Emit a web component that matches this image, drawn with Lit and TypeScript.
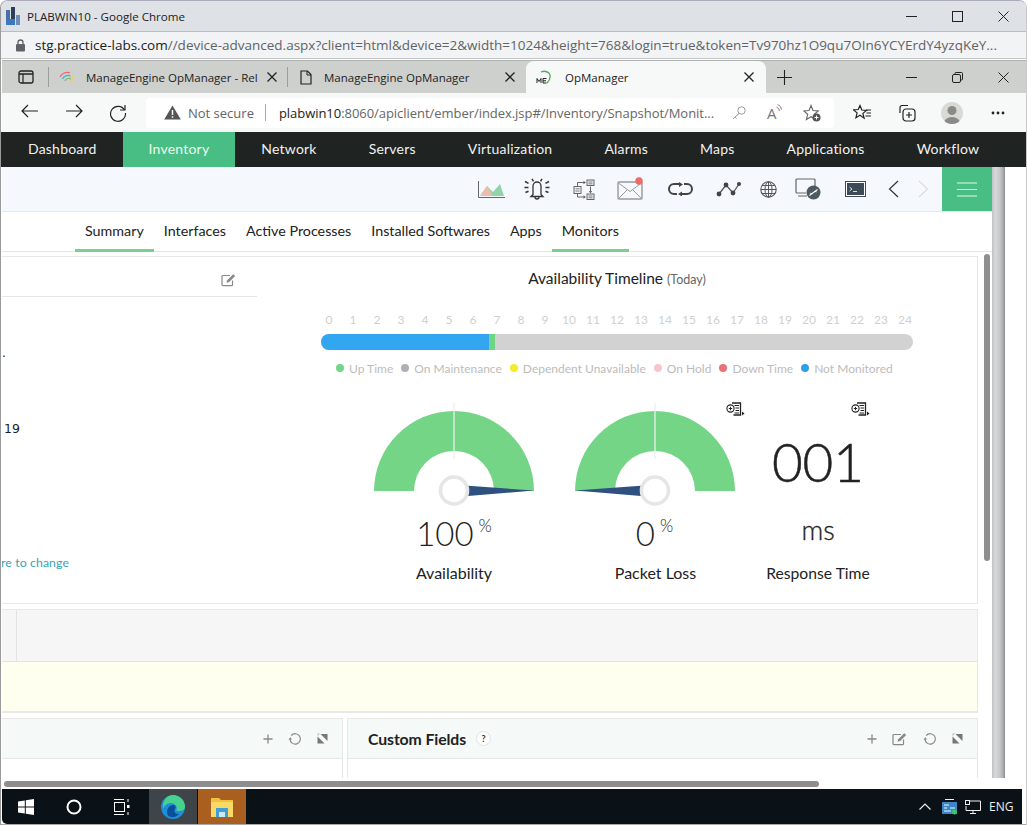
import { LitElement, html, css, svg } from "lit";
import { customElement } from "lit/decorators.js";

const ic = (w: number, h: number, body: unknown, cls = "") =>
  html`<svg class=${cls} width=${w} height=${h} viewBox="0 0 ${w} ${h}" fill="none">${body}</svg>`;

const closeX = (c = "#222") => ic(12, 12, svg`<path d="M1.5 1.5l9 9M10.5 1.5l-9 9" stroke=${c} stroke-width="1.3"/>`);
const plus = ic(10, 10, svg`<path d="M5 .5v9M.5 5h9" stroke="#888" stroke-width="1.3"/>`);
const refresh = ic(14, 14, svg`<path d="M3.2 3.6A5.2 5.2 0 1 1 2 7" stroke="#888" stroke-width="1.2"/><path d="M.4 7.4l2-2.2 1.6 2.4z" fill="#888"/>`);
const expand = ic(11, 11, svg`<path d="M3.500 1H10.500V8z" fill="#777"/><path d="M.500 3.500V10.500H7.500z" fill="#777"/><path d="M.500 .500H3L.500 3z" fill="#bbb"/>`);
const edit = ic(16, 14, svg`<path d="M11.5 7.5v4.2a1 1 0 0 1-1 1H2a1 1 0 0 1-1-1V3.5a1 1 0 0 1 1-1h7" stroke="#888" stroke-width="1.2"/><path d="M5.5 9.8l.7-2.6L12.2 1.2l2 1.9-6 6z" fill="#888"/>`);
const report = ic(19, 14, svg`<path d="M6 1h8.500v12H7.500" stroke="#222" stroke-width="1.300"/><path d="M8.500 3.500h4.500M9.500 6h3.500M9.500 8.500h3.500M8.500 11h4.500" stroke="#222"/><circle cx="4.500" cy="6.500" r="3.600" fill="#fff" stroke="#222" stroke-width="1.100"/><path d="M2.800 6.500h3.400M4.500 4.800v3.400" stroke="#222"/><path d="M16 9.500l2.500 2L16 13.500z" fill="#222"/>`);

const gauge = (flip: boolean) => html`<svg class="gaugeSvg" width="170" height="106" viewBox="0 0 170 106">
  <path d="M5 90A80 80 0 0 1 165 90H125A40 40 0 0 0 45 90Z" fill="#75d586"/>
  <path d="M85 2V58" stroke="#ecf2ec" stroke-width="1.300"/>
  <g transform=${flip ? "translate(170,0) scale(-1,1)" : ""}>
    <path d="M99 84.800L165 89.500L99 95Z" fill="#2e5180"/>
  </g>
  <circle cx="85" cy="89.500" r="13.500" fill="#fff" stroke="#e6e6e6" stroke-width="3.600"/>
</svg>`;

const legend: [string, string][] = [
  ["#73d68a", "Up Time"], ["#b0b0b0", "On Maintenance"], ["#f5ea2c", "Dependent Unavailable"],
  ["#f7c6cc", "On Hold"], ["#e87378", "Down Time"], ["#2f9fec", "Not Monitored"],
];

@customElement("app-root")
export class AppRoot extends LitElement {
  static styles = css`
    :host { display: block; width: 1027px; height: 825px; overflow: hidden; background: #fff; font-family: "Lato", sans-serif; color: #222; }
    * { box-sizing: border-box; }
    svg { display: block; flex: none; }
    .win { position: relative; height: 825px; display: flex; flex-direction: column; background: #fff; border-left: 1px solid #9a9a9a; border-right: 1px solid #c8c8c8; border-top: 1px solid #aab; border-radius: 8px 8px 0 0; overflow: hidden; }
    .title { height: 31px; flex: none; background: #dee1e6; display: flex; align-items: center; font: 11.6px "Open Sans", sans-serif; color: #222; padding-left: 5px; border-bottom: 1px solid #b9bcc0; }
    .title span { margin-left: 6px; }
    .wc { margin-left: auto; display: flex; align-items: center; justify-content: flex-end; }
    .wc > div { width: 46px; display: flex; justify-content: center; }
    .addr { height: 27px; flex: none; background: #f1f3f4; display: flex; align-items: center; padding-left: 14px; gap: 9px; font: 13.5px "Open Sans", sans-serif; color: #5f6368; white-space: nowrap; border-bottom: 1px solid #c3c5c8; }
    .addr b { font-weight: 400; color: #222; }
    .tabs { height: 33px; flex: none; margin: 1px 0 0 1px; background: #cdd0cc; display: flex; align-items: stretch; font: 11.5px "Open Sans", sans-serif; color: #222; border-top: 1px solid #b0b2b0; }
    .tabs > .cell { display: flex; align-items: center; white-space: nowrap; }
    .t0 { width: 46px; justify-content: center; padding-left: 1px; }
    .sep { width: 1px; background: #9c9e9c; height: 20px; margin-top: 6px; flex: none; }
    .t1 { width: 238px; padding-left: 10px; }
    .t1 .lbl { margin-left: 11px; width: 175px; flex: none; margin-right: 5px; }
    .t2 { width: 238px; padding-left: 12px; }
    .t2 .lbl { margin-left: 12px; width: 180px; flex: none; }
    .t3 { width: 240px; padding-left: 10px; background: #f7f9f8; border-radius: 8px 8px 0 0; }
    .t3 .lbl { margin-left: 13px; width: 178px; flex: none; }
    .plus { width: 36px; justify-content: center; }
    .tabs .wc { flex: 1; }
    .tbar { height: 39px; flex: none; margin-left: 1px; background: #f7f9f8; display: flex; align-items: center; }
    .nav3 { width: 144px; display: grid; grid-template-columns: 44px 44px 44px; padding-left: 6px; justify-items: center; flex: none; }
    .omni { width: 688px; height: 30px; flex: none; background: #fff; border-radius: 4px; display: flex; align-items: center; padding-left: 18px; font: 13px "Open Sans", sans-serif; color: #666; white-space: nowrap; }
    .omni .ns { margin-left: 7px; color: #5f6368; }
    .omni .div { width: 1px; height: 17px; background: #aaa; margin: 0 13px 0 11px; }
    .omni b { font-weight: 400; color: #222; }
    .omni .url { width: 441px; flex: none; letter-spacing: -.045px; }
    .omni .i1 { margin-left: 12px; }
    .omni .i2 { margin-left: 21px; width: 18px; display: flex; align-items: flex-start; font-size: 15px; line-height: 18px; color: #777; }
    .omni .i3 { margin-left: 18px; }
    .rt { display: grid; grid-template-columns: 47px 44px 46px 45px; margin-left: 4px; justify-items: center; align-items: center; }
    .avatar { width: 22px; height: 22px; border-radius: 50%; overflow: hidden; }
    .page { flex: 1; min-height: 0; display: flex; margin-left: 1px; }
    .main { width: 990px; flex: none; position: relative; overflow: hidden; display: flex; flex-direction: column; }
    .strip { width: 13px; flex: none; height: 611px; background: linear-gradient(90deg, #bfc1c3, #d8d9da 25%, #c6c8c9 60%, #a9abad 85%, #8a8c8e); }
    .topnav { height: 35px; flex: none; background: #1f2422; display: flex; font: 14px "Lato", sans-serif; letter-spacing: .21px; color: #f1f1f1; padding-left: 1px; }
    .topnav div { padding: 0 26px 2px; display: flex; align-items: center; white-space: nowrap; }
    .topnav .on { background: #49be84; color: #eafaf0; }
    .content { height: 611px; display: flex; flex-direction: column; flex: none; position: relative; overflow: hidden; }
    .tools { height: 45px; flex: none; background: #f5f8fc; border-bottom: 1px solid #e6e8ea; display: flex; padding-left: 466px; }
    .tgrid { display: grid; grid-template-columns: 46px 46px 48px 44px 56px 40px 40px 40px 54px 22px 38px; justify-items: center; align-items: center; height: 44px; }
    .mail { width: 27px; height: 24px; }
    .ham { width: 50px; height: 44px; background: #49be84; display: flex; align-items: center; justify-content: center; }
    .subtabs { height: 40px; flex: none; border-bottom: 1px solid #e6e6e6; display: flex; padding-left: 73px; font: 14.3px "Lato", sans-serif; color: #222; }
    .subtabs div { padding: 0 10px; display: flex; align-items: center; height: 40px; border-bottom: 3px solid transparent; white-space: nowrap; }
    .subtabs .on { border-bottom-color: #78cf8e; }
    .card { height: 348px; flex: none; margin: 4px 14px 0 -4px; border: 1px solid #e8e8e8; display: flex; }
    .left { width: 258px; flex: none; display: flex; flex-direction: column; }
    .lh { height: 40px; flex: none; border-bottom: 1px solid #e6e6e6; display: flex; align-items: center; justify-content: flex-end; padding-right: 20px; padding-top: 6px; }
    .dot { margin: 48px 0 0 3px; font: 12.5px "DejaVu Sans", sans-serif; height: 16px; line-height: 16px; color: #222; }
    .l19 { margin: 60px 0 0 5px; font: 12.5px "DejaVu Sans", sans-serif; height: 16px; line-height: 16px; color: #222; }
    .link { margin: 118px 0 0 2px; font: 12.300px "Lato", sans-serif; color: #36a3b5; white-space: nowrap; letter-spacing: .1px; }
    .right { flex: 1; min-width: 0; display: flex; flex-direction: column; }
    .tl { height: 46px; flex: none; text-align: center; padding-top: 12px; font: 15.500px "Lato", sans-serif; color: #222; white-space: nowrap; }
    .tl small { font-size: 12.500px; color: #666; }
    .hrs { margin: 10px 0 0 64px; width: 592px; display: flex; justify-content: space-between; font: 12px "Lato", sans-serif; color: #cfcfcf; height: 14px; line-height: 14px; flex: none; }
    .hrs span { width: 16px; text-align: center; }
    .bar { width: 592px; height: 16px; flex: none; margin: 7px 0 0 64px; border-radius: 8px; background: #d2d2d2; overflow: hidden; display: flex; }
    .bar .a { width: 168px; background: #33a6f2; }
    .bar .b { width: 6px; background: #70d487; }
    .lg { display: flex; margin: 10px 0 0 79px; font: 12px "Lato", sans-serif; color: #bcbcbc; height: 16px; align-items: center; flex: none; white-space: nowrap; }
    .lg i { width: 8px; height: 8px; border-radius: 50%; margin-right: 5px; flex: none; }
    .lg span { margin-right: 8px; }
    .gs { display: flex; margin-top: 25px; padding-left: 97px; height: 176px; flex: none; position: relative; }
    .g { width: 200px; position: relative; display: flex; flex-direction: column; align-items: center; }
    .g2 { width: 201px; }
    .g2 .cap { margin-left: 2px; }
    .g3 { width: 126px; }
    .val { font-size: 33px; font-weight: 300; color: #222; height: 40px; line-height: 40px; margin-top: 6px; display: flex; white-space: nowrap; }
    .val sup { font-size: 17px; line-height: 17px; margin: 4px 0 0 5px; font-weight: 300; }
    .cap { font: 16px "Lato", sans-serif; margin-top: 10px; height: 20px; line-height: 20px; color: #222; white-space: nowrap; }
    .ms { font-size: 53px; font-weight: 300; color: #222; line-height: 60px; height: 60px; margin-top: 31px; -webkit-text-stroke: .5px #222; }
    .msu { font-size: 27px; height: 30px; line-height: 30px; margin-top: 23px; font-weight: 300; -webkit-text-stroke: .3px #222; }
    .g3 .cap { margin-top: 18px; font-size: 15.700px; }
    .rep { position: absolute; top: 1px; }
    .rep1 { left: 172px; }
    .rep2 { left: 96px; }
    .grey { height: 52px; flex: none; margin: 5px 14px 0 -4px; background: #f6f6f6; border: 1px solid #e8e8e8; border-bottom: 0; display: flex; }
    .grey i { width: 1px; margin-left: 17px; background: #e4e4e4; }
    .yel { height: 52px; flex: none; margin: 0 14px 0 -4px; background: #ffffef; border: 1px solid #e8e8e8; border-bottom-width: 2px; border-top-color: #e3e3e3; }
    .wid { flex: 1; display: flex; gap: 4px; margin: 5px 14px 0 -4px; min-height: 0; }
    .w { border: 1px solid #e8e8e8; border-bottom: 0; }
    .w1 { width: 345px; flex: none; }
    .w2 { flex: 1; }
    .wh { height: 40px; background: #f5f9f7; border-bottom: 1px solid #e6e8e7; display: flex; align-items: center; justify-content: flex-end; padding-right: 14px; }
    .wh .ttl { margin-right: auto; margin-left: 20px; font: 700 15.800px "Lato", sans-serif; color: #222; display: flex; align-items: center; gap: 10px; white-space: nowrap; letter-spacing: -.1px; }
    .help { width: 15px; height: 15px; border-radius: 50%; background: #fff; border: 1px solid #e2e2e2; font: 700 9px "Lato", sans-serif; display: flex; align-items: center; justify-content: center; color: #333; }
    .wh .ic { margin-left: 15px; }
    .vthumb { position: absolute; left: 982px; top: 87px; width: 6px; height: 307px; border-radius: 3px; background: #8f8f8f; }
    .hbar { height: 10px; flex: none; margin-left: 1px; padding: 2px 0 0 2px; }
    .hbar div { width: 815px; height: 6px; border-radius: 3px; background: #8e8e8e; }
    .task { height: 35px; flex: none; margin: 0 4px 0 1px; background: #0a1218; border-radius: 0 0 0 5px; display: flex; align-items: center; color: #eee; font: 12px "Open Sans", sans-serif; }
    .task .c { height: 35px; display: flex; align-items: center; justify-content: center; width: 48px; }
    .task .edge { background: #3e4448; width: 48px; margin-left: 3px; }
    .task .fold { background: #a85f1f; width: 48px; margin-left: 1px; }
    .tray { margin-left: auto; display: flex; align-items: center; }
    .tray .c { width: 24px; }
    .tray span { width: 37px; padding-left: 4px; font-size: 12px; }
    .foot { height: 1px; flex: none; background: #a8aaac; }
  `;

  render() {
    const hours = Array.from({ length: 25 }, (_, i) => i);
    return html`<div class="win">
      <div class="title">
        ${ic(15, 18, svg`<path d="M0 3h4v15H0z" fill="#4a6fa8"/><path d="M5 0h4v18H5z" fill="#2c3f5e"/><path d="M10 8h4v10h-4z" fill="#6f8db8"/><path d="M0 12h9v6H0z" fill="#3b78c2"/>`)}
        <span>PLABWIN10 - Google Chrome</span>
        <div class="wc">
          <div>${ic(11, 11, svg`<path d="M0 5.5h11" stroke="#222"/>`)}</div>
          <div>${ic(11, 11, svg`<rect x=".5" y=".5" width="10" height="10" stroke="#222"/>`)}</div>
          <div>${ic(11, 11, svg`<path d="M.5.5l10 10M10.5.5l-10 10" stroke="#222"/>`)}</div>
        </div>
      </div>
      <div class="addr">
        ${ic(11, 13, svg`<rect x="1" y="5" width="9" height="7.5" rx="1" fill="#5f6368"/><path d="M3 5.5V3.5a2.5 2.5 0 0 1 5 0v2" stroke="#5f6368" stroke-width="1.3"/>`)}
        <div><b>stg.practice-labs.com</b>//device-advanced.aspx?client=html&amp;device=2&amp;width=1024&amp;height=768&amp;login=true&amp;token=Tv970hz1O9qu7OIn6YCYErdY4yzqKeY...</div>
      </div>
      <div class="tabs">
        <div class="cell t0">${ic(16, 14, svg`<rect x="1" y="1" width="14" height="12" rx="2" stroke="#222" stroke-width="1.3"/><path d="M1 4h14" stroke="#222" stroke-width="1.6"/><path d="M5 4v9" stroke="#222" stroke-width="1.2"/>`)}</div>
        <div class="sep"></div>
        <div class="cell t1">
          ${ic(16, 16, svg`<path d="M1 8a8 8 0 0 1 10-4" stroke="#e06a70" stroke-width="1.2"/><path d="M3.5 10a6 6 0 0 1 8-3" stroke="#3fb4d0" stroke-width="1.2"/><path d="M6 12a4 4 0 0 1 6-2" stroke="#6cc07a" stroke-width="1.2"/><path d="M13 6q2 4-1 8" stroke="#ecd070" stroke-width="1.6"/>`)}
          <div class="lbl">ManageEngine OpManager - Rel</div>
          ${closeX()}
        </div>
        <div class="sep"></div>
        <div class="cell t2">
          ${ic(12, 15, svg`<path d="M1 1h6.5L11 4.5V14H1z" stroke="#222" stroke-width="1.2"/><path d="M7 1v4h4" stroke="#222"/>`)}
          <div class="lbl">ManageEngine OpManager</div>
          ${closeX()}
        </div>
        <div class="cell t3">
          ${ic(16, 16, svg`<path d="M5 3a8 8 0 0 1 8 1q3 5-2 10" stroke="#4caf50" stroke-width="1.3"/><path d="M1 14V9.500l2 3 2-3V14M7 9.500h3.500M7 11.800h3M7 14h3.500M7 9.500V14" stroke="#222" stroke-width="1"/>`)}
          <div class="lbl">OpManager</div>
          ${closeX()}
        </div>
        <div class="cell plus">${ic(15, 15, svg`<path d="M7.5 0v15M0 7.5h15" stroke="#222" stroke-width="1.1"/>`)}</div>
        <div class="cell wc">
          <div>${ic(11, 11, svg`<path d="M0 5.5h11" stroke="#222"/>`)}</div>
          <div>${ic(11, 11, svg`<rect x=".5" y="2.5" width="8" height="8" rx="1.5" stroke="#222"/><path d="M3 2.5V1.5a1 1 0 0 1 1-1h5.5a1 1 0 0 1 1 1V7a1 1 0 0 1-1 1H8.5" stroke="#222"/>`)}</div>
          <div>${ic(11, 11, svg`<path d="M.5.5l10 10M10.5.5l-10 10" stroke="#222"/>`)}</div>
        </div>
      </div>
      <div class="tbar">
        <div class="nav3">
          ${ic(18, 14, svg`<path d="M17 7H1M7 1L1 7l6 6" stroke="#222" stroke-width="1.2"/>`)}
          ${ic(18, 14, svg`<path d="M1 7h16M11 1l6 6-6 6" stroke="#222" stroke-width="1.2"/>`)}
          ${ic(18, 18, svg`<path d="M15.5 6A7.5 7.5 0 1 0 16.5 9" stroke="#222" stroke-width="1.2"/><path d="M16 1v5h-5" stroke="#222" stroke-width="1.2"/>`)}
        </div>
        <div class="omni">
          ${ic(17, 15, svg`<path d="M8.5 0.5L16.8 14.5H.2z" fill="#555"/><path d="M8.5 5v5M8.5 11.2v1.6" stroke="#fff" stroke-width="1.5"/>`)}
          <span class="ns">Not secure</span><div class="div"></div>
          <div class="url"><b>plabwin10</b>:8060/apiclient/ember/index.jsp#/Inventory/Snapshot/Monit...</div>
          <div class="i1">${ic(14, 14, svg`<circle cx="9.5" cy="4.5" r="3.7" stroke="#999"/><path d="M7 7.5L1 13M3 11l1.5 1.5" stroke="#999"/>`)}</div>
          <div class="i2"><span>A</span>${ic(6, 10, svg`<path d="M.5 3q3 1 3 4M1.500 .5q4 1.500 4 5" stroke="#777" stroke-width=".9"/>`)}</div>
          <div class="i3">${ic(18, 18, svg`<path d="M8 1.5l2 5 5.3.4-4 3.4 1.3 5.2L8 12.7 3.400 15.500l1.300-5.200-4-3.400 5.300-.400z" stroke="#666" stroke-width="1.1"/><circle cx="13.500" cy="13.500" r="4" fill="#555"/><path d="M13.500 11.500v4M11.500 13.500h4" stroke="#fff"/>`)}</div>
        </div>
        <div class="rt">
          ${ic(18, 17, svg`<path d="M7 1.500l1.800 4.500 4.700.400-3.600 3 1.200 4.800L7 11.300 2.900 13.700l1.200-4.800-3.600-3 4.700-.400z" stroke="#222" stroke-width="1.2"/><path d="M13 6h5M13.500 9h4.500M12.500 12h5.500" stroke="#222" stroke-width="1.100"/>`)}
          ${ic(18, 18, svg`<path d="M2 9V3.500A2 2 0 0 1 4 1.500h6" stroke="#222" stroke-width="1.200"/><rect x="5" y="5" width="12" height="12" rx="3" stroke="#222" stroke-width="1.200"/><path d="M11 8v6M8 11h6" stroke="#222" stroke-width="1.200"/>`)}
          <div class="avatar">${ic(22, 22, svg`<rect width="22" height="22" fill="#d9d9d6"/><circle cx="11" cy="8.500" r="4.500" fill="#8a8a88"/><path d="M2.500 22a8.500 7 0 0 1 17 0z" fill="#8a8a88"/>`)}</div>
          ${ic(14, 4, svg`<circle cx="2" cy="2" r="1.400" fill="#222"/><circle cx="7" cy="2" r="1.400" fill="#222"/><circle cx="12" cy="2" r="1.400" fill="#222"/>`)}
        </div>
      </div>
      <div class="topnav">
        <div>Dashboard</div><div class="on">Inventory</div><div>Network</div><div>Servers</div><div>Virtualization</div><div>Alarms</div><div>Maps</div><div>Applications</div><div>Workflow</div>
      </div>
      <div class="page">
        <div class="main">
          <div class="content">
            <div class="tools">
              <div class="tgrid">
                ${ic(27, 17, svg`<path d="M2 15L9 5l6 6 7-8 4 12z" fill="#8fd5a6"/><path d="M2 15L9 5l6 10z" fill="#eebcae"/><path d="M.5 0v16.500H27" stroke="#666"/>`)}
                ${ic(28, 22, svg`<path d="M10 16.500V8a4 4 0 0 1 8 0V16.500l2 2H8zM12 19a2 2 0 0 0 4 0" stroke="#333" stroke-width="1.300"/><path d="M9 .8l1.500 2.500M19 .8l-1.500 2.500M2 3.500l3.500 1.800M26 3.500l-3.500 1.800M1.500 9.500h4M26.500 9.500h-4M2.500 14.500l3-1.300M25.500 14.500l-3-1.300" stroke="#333" stroke-width="1.500"/>`)}
                ${ic(22, 21, svg`<rect x="14" y="1" width="7" height="5.500" fill="#eef0f2" stroke="#666"/><rect x="14" y="15" width="7" height="5.500" fill="#eef0f2" stroke="#666"/><rect x="1" y="7.500" width="7" height="7" fill="#eef0f2" stroke="#666"/><path d="M15.500 3h4M15.500 4.800h4M15.500 17h4M15.500 18.800h4M2.500 9.800h4M2.500 12h4" stroke="#666" stroke-width=".8"/><path d="M4.500 7.500V3.500h6.500M4.500 14.500V18h6.500M17.500 7.500v5.500" stroke="#666"/><path d="M10.500 1.800L13 3.500l-2.500 1.700zM10.500 16.300L13 18l-2.500 1.700zM15.800 12h3.400l-1.700 2.500z" fill="#666"/>`)}
                <div class="mail">${ic(27, 24, svg`<rect x="1" y="5" width="24" height="17" rx="1" stroke="#999" stroke-width="1.400"/><path d="M1.500 6L13 14.500 24.500 6M2 21l8-8M24 21l-8-8" stroke="#999"/><circle cx="22" cy="4" r="3.700" fill="#ef6b6b"/>`)}</div>
                ${ic(27, 14, svg`<path d="M13 2H7a5 5 0 0 0 0 10h3M14 12h6a5 5 0 0 0 0-10h-3" stroke="#444" stroke-width="2"/><path d="M12 0v5l4-2.500zM15 9.500v5l-4-2.500z" fill="#444"/>`)}
                ${ic(25, 16, svg`<path d="M3 13l7-9 7 8 6-9" stroke="#555" stroke-width="1.300"/><circle cx="3" cy="13" r="2.400" fill="#444"/><circle cx="10" cy="4" r="2.400" fill="#444"/><circle cx="17" cy="12" r="2.400" fill="#444"/><circle cx="23" cy="3" r="2" fill="#444"/>`)}
                ${ic(17, 17, svg`<circle cx="8.500" cy="8.500" r="7.700" stroke="#555" stroke-width="1.100"/><ellipse cx="8.500" cy="8.500" rx="3.500" ry="7.700" stroke="#555"/><path d="M8.500 1v15M1 8.500h15M2 4.500h13M2 12.500h13" stroke="#555"/>`)}
                ${ic(26, 22, svg`<path d="M20 8V2a1 1 0 0 0-1-1H2a1 1 0 0 0-1 1v12a1 1 0 0 0 1 1h9M3 18h9" stroke="#666" stroke-width="1.200"/><circle cx="18.500" cy="14.500" r="7" fill="#4f5962"/><path d="M14.500 17.500l2-1.500-1-1M22.500 11.500l-2 1.500 1 1M16.500 16l4-3" stroke="#fff" stroke-width="1.100"/>`)}
                ${ic(21, 16, svg`<rect x=".5" y=".5" width="20" height="15" fill="#fff" stroke="#3e4a58"/><rect x="2" y="2" width="17" height="12" fill="#3e4a58"/><path d="M4.500 6l2.500 2-2.500 2M8 10.500h4" stroke="#fff" stroke-width=".8"/>`)}
                ${ic(11, 18, svg`<path d="M10 1L1.500 9l8.500 8" stroke="#333" stroke-width="1.200"/>`)}
                ${ic(11, 18, svg`<path d="M1 1l8.500 8L1 17" stroke="#ddd" stroke-width="1.200"/>`)}
              </div>
              <div class="ham">${ic(20, 15, svg`<path d="M0 1h20M0 7.500h20M0 14h20" stroke="#e4f5ea" stroke-width="1.100"/>`)}</div>
            </div>
            <div class="subtabs">
              <div class="on">Summary</div><div>Interfaces</div><div>Active Processes</div><div>Installed Softwares</div><div>Apps</div><div class="on">Monitors</div>
            </div>
            <div class="card">
              <div class="left">
                <div class="lh">${edit}</div>
                <div class="dot">.</div>
                <div class="l19">19</div>
                <div class="link">re to change</div>
              </div>
              <div class="right">
                <div class="tl">Availability Timeline <small>(Today)</small></div>
                <div class="hrs">${hours.map((h) => html`<span>${h}</span>`)}</div>
                <div class="bar"><div class="a"></div><div class="b"></div></div>
                <div class="lg">${legend.map(([c, t]) => html`<i style="background:${c}"></i><span>${t}</span>`)}</div>
                <div class="gs">
                  <div class="g">${gauge(false)}<div class="val">100<sup>%</sup></div><div class="cap">Availability</div></div>
                  <div class="g g2">${gauge(true)}<div class="val">0<sup>%</sup></div><div class="cap">Packet Loss</div><div class="rep rep1">${report}</div></div>
                  <div class="g g3"><div class="val ms">001</div><div class="val msu">ms</div><div class="cap">Response Time</div><div class="rep rep2">${report}</div></div>
                </div>
              </div>
            </div>
            <div class="grey"><i></i></div>
            <div class="yel"></div>
            <div class="wid">
              <div class="w w1"><div class="wh"><div class="ic">${plus}</div><div class="ic">${refresh}</div><div class="ic">${expand}</div></div></div>
              <div class="w w2"><div class="wh"><div class="ttl">Custom Fields <span class="help">?</span></div><div class="ic">${plus}</div><div class="ic">${edit}</div><div class="ic">${refresh}</div><div class="ic">${expand}</div></div></div>
            </div>
            <div class="vthumb"></div>
          </div>
        </div>
        <div class="strip"></div>
      </div>
      <div class="hbar"><div></div></div>
      <div class="task">
        <div class="c">${ic(16, 16, svg`<path d="M0 2.500L6.800 1.500V7.500H0zM7.800 1.300L16 0V7.500H7.800zM0 8.500H6.800V14.500L0 13.500zM7.800 8.500H16V16L7.800 14.700z" fill="#fff"/>`)}</div>
        <div class="c">${ic(16, 16, svg`<circle cx="8" cy="8" r="6.500" stroke="#fff" stroke-width="2"/>`)}</div>
        <div class="c">${ic(16, 16, svg`<path d="M0 .5h10M0 15.500h10" stroke="#fff"/><rect x=".5" y="3.500" width="10" height="9" stroke="#fff"/><path d="M14 0v3M14 13v3" stroke="#fff"/><rect x="13" y="6" width="2.500" height="3" fill="#fff"/>`)}</div>
        <div class="c edge">${ic(24, 24, svg`<circle cx="12" cy="12" r="12" fill="#1d8fd8"/><path d="M12 0a12 12 0 0 1 12 12c0 3-3 4-6 4-2 0-3-.5-2.500-1.500C17 12 14 8 10 8 6 8 3 11 2 14 1 6 6 0 12 0z" fill="#46d18e"/><path d="M6 17c0-4 3-7 6-7s3 2 2 4-1 5 4 5c-3 4-12 5-12-2z" fill="#0b4f9a"/>`)}</div>
        <div class="c fold">${ic(22, 20, svg`<path d="M0 1h8l2 2h12v4H0z" fill="#f0c040"/><rect y="5" width="22" height="15" fill="#fbd968"/><path d="M5 11h12v9H5z" fill="#3f9fd4"/><path d="M8 15h6v5H8z" fill="#cfe6f4"/>`)}</div>
        <div class="tray">
          <div class="c">${ic(12, 7, svg`<path d="M.5 6.500L6 1l5.500 5.500" stroke="#eee" stroke-width="1.200"/>`)}</div>
          <div class="c">${ic(15, 16, svg`<path d="M3 .5h9" stroke="#eee"/><rect x="0" y="3" width="15" height="12" fill="#3f84c4"/><path d="M2 6h5M2 9h3M8 9h5M2 12h7" stroke="#dff"/><circle cx="12.500" cy="13" r="2.500" fill="#3fc46a"/>`)}</div>
          <div class="c">${ic(16, 14, svg`<path d="M4 1h11.500v9.500H1V6" stroke="#eee"/><rect x=".5" y=".5" width="4" height="4" fill="#0a1218" stroke="#eee"/><path d="M8 10.500v3M5 13.500h6" stroke="#eee"/>`)}</div>
          <span>ENG</span>
        </div>
      </div>
      <div class="foot"></div>
    </div>`;
  }
}
